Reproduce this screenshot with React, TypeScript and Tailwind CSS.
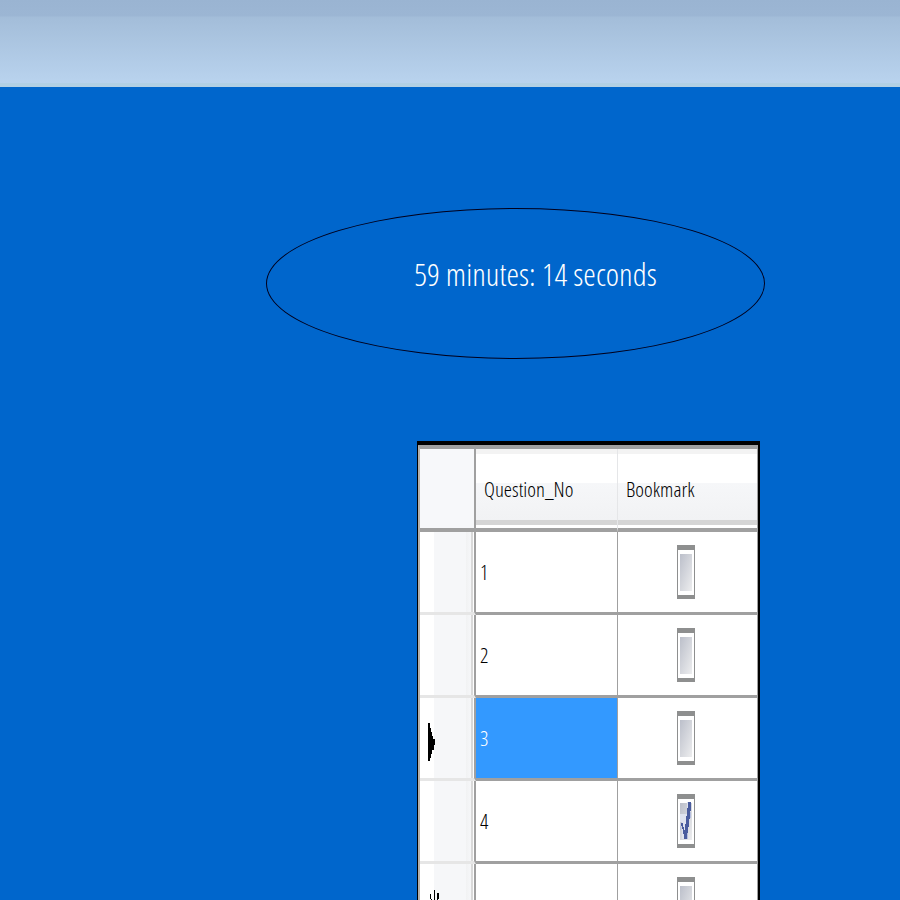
const rows = [
  { no: '1', marked: false, pointer: '' },
  { no: '2', marked: false, pointer: '' },
  { no: '3', marked: false, pointer: 'current' },
  { no: '4', marked: true, pointer: '' },
  { no: '', marked: false, pointer: 'new' },
];

function Tick() {
  return (
    <svg
      className="pointer-events-none absolute inset-0 hidden h-full w-full peer-checked:block"
      viewBox="0 0 18 54"
      shapeRendering="crispEdges"
      aria-hidden="true"
    >
      <path d="M10 8h1v28h-3v9H5V28H3v-8h7z" fill="#dfe3ef" />
      <path d="M4 29h2v4h1v3h1v-6h1v-8h1v-8h1V8h3v9h-1v8h-1v8h-1v7h-1v5H7v-5H6v-5H5v-3H4z" fill="#4a5c9e" />
      <path d="M3 32h1v4H3zM10 39h1v6h-1zM13 18h1v6h-1z" fill="#b5bede" />
    </svg>
  );
}

function RowMarker({ kind }: { kind: string }) {
  if (kind === 'current') {
    return (
      <svg className="mt-2 ml-2 block" width="8" height="38" viewBox="0 0 8 38" shapeRendering="crispEdges" aria-label="Current row">
        <path d="M0 0h2v5h1v4h1v4h1v3h2v6H6v5H4v4H3v4H2v3H0z" fill="#000" />
      </svg>
    );
  }
  if (kind === 'new') {
    return (
      <svg className="ml-2 block" width="14" height="38" viewBox="0 0 14 38" shapeRendering="crispEdges" aria-label="New row">
        <path d="M6 5h1v30H6zM2 9h1v5h1v3H3v-3H2zM9 8h2v6h-1v3H9zM0 17h12v4H0zM3 21h1v5H3v4H2v-5h1zM9 21h1v4h1v5h-1v-4H9z" fill="#000" />
      </svg>
    );
  }
  return null;
}

export default function App() {
  return (
    <div className="flex h-screen flex-col overflow-hidden bg-[#0066cc] font-['Open_Sans_Condensed_Light','Open_Sans_Condensed','Open_Sans',sans-serif] font-light">
      <header className="h-[87px] shrink-0 border-b-4 border-[#b2d0e4] bg-[linear-gradient(to_bottom,#9ab4d2_0px,#9cb6d4_16px,#a3bdd9_17px,#b9d3ee_83px)]" />
      <main className="pt-[121px] pl-[266px]">
        <div className="flex h-[151px] w-[499px] items-center justify-center rounded-[50%] border border-[#00001c] pb-5 pl-10">
          <p className="text-[32px] leading-10 whitespace-nowrap text-white">59 minutes: 14 seconds</p>
        </div>
        <div className="mt-[82px] ml-[151px] w-[343px] border-t-4 border-r-2 border-l border-black">
          <table className="w-full table-fixed border-separate border-spacing-0 border-t-4 border-r border-l-2 border-[#a0a0a0] border-l-[#b4b0aa] bg-white">
            <colgroup>
              <col className="w-[56px]" />
              <col className="w-[142px]" />
              <col />
            </colgroup>
            <thead>
              <tr className="h-[83px] text-left text-[21px] leading-8 text-black">
                <td className="border-r-2 border-b-4 border-[#a0a0a0] bg-[#f7f8fa] p-0" />
                <th className="border-r border-b-4 border-r-[#e5e6e8] border-b-[#a0a0a0] bg-[linear-gradient(to_bottom,#f3f3f3_0px,#f3f3f3_5px,#fff_5px,#fff_34px,#f6f7f9_34px,#f1f2f4_71px,#d5d5d5_71px,#d5d5d5_76px,#fff_76px)] p-0 pl-2 font-light">
                  Question_No
                </th>
                <th className="border-b-4 border-[#a0a0a0] bg-[linear-gradient(to_bottom,#f3f3f3_0px,#f3f3f3_5px,#fff_5px,#fff_34px,#f6f7f9_34px,#f1f2f4_71px,#d5d5d5_71px,#d5d5d5_76px,#fff_76px)] p-0 pl-2 font-light">
                  Bookmark
                </th>
              </tr>
            </thead>
            <tbody>
              {rows.map((row) => (
                <tr key={row.pointer + row.no} className="h-[83px]">
                  <td className="border-r-2 border-b-[3px] border-r-[#a0a0a0] border-b-[#e6e6e6] bg-[linear-gradient(to_right,#fff_0px,#fff_14px,#f6f7f9_14px,#f6f7f9_46px,#f1f2f3_46px,#f6f7f9_51px,#d9d9d9_51px,#d9d9d9_53px,#fff_53px)] p-0">
                    <RowMarker kind={row.pointer} />
                  </td>
                  <td
                    className={
                      row.pointer === 'current'
                        ? 'border-r border-b-[3px] border-[#a0a0a0] bg-[#3399ff] p-0 pl-1 text-[21px] leading-8 text-white'
                        : 'border-r border-b-[3px] border-[#a0a0a0] bg-white p-0 pl-1 text-[21px] leading-8 text-black'
                    }
                  >
                    {row.no}
                  </td>
                  <td className="border-b-[3px] border-[#a0a0a0] bg-white p-0 pr-1">
                    <label className="relative mx-auto block h-[54px] w-[18px]">
                      <input
                        type="checkbox"
                        defaultChecked={row.marked}
                        aria-label={'Bookmark question ' + (row.no || 'new')}
                        className="peer block h-full w-full appearance-none border-x border-t-[5px] border-b-4 border-[#8e8f8f] bg-linear-to-br from-[#b5b9c5] to-[#f4f4f4] bg-clip-content px-[2px] py-1"
                      />
                      <Tick />
                    </label>
                  </td>
                </tr>
              ))}
            </tbody>
          </table>
        </div>
      </main>
    </div>
  );
}
